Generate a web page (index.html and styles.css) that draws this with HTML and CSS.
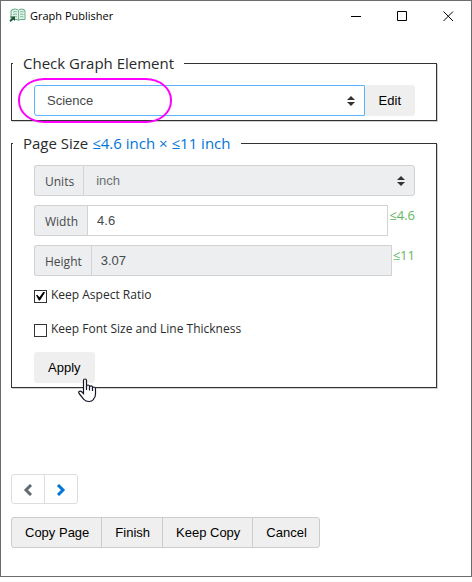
FILE: index.html
```html
<!DOCTYPE html>
<html lang="en">
<head>
<meta charset="utf-8">
<title>Graph Publisher</title>
<link rel="stylesheet" href="styles.css">
</head>
<body>
<div class="window">
  <header class="titlebar">
    <svg class="app-icon" width="18" height="16" viewBox="0 0 18 16" aria-hidden="true">
      <path d="M3 2.500V1.500Q7 .2 9.500 2.200Q12 .2 15 1.500V2.500H16V11.500H11L9.500 12.500L8 11.500H2V2.500Z" fill="#e3f3ea" stroke="#64a987"/>
      <path d="M9.500 2.500V12M4 4Q6.500 3 8 4M4 6.500Q6.500 5.500 8 6.500M4 9Q6.500 8 8 9M11 4Q13 3 14.500 4M11 6.500Q13 5.500 14.500 6.500M11 9Q13 8 14.500 9" fill="none" stroke="#7db898"/>
      <path d="M1 8.500H6V13L4.500 11.500L1.500 14L.5 12.500L3 10Z" fill="#1d5438"/>
    </svg>
    <h1 class="title">Graph Publisher</h1>
    <div class="window-controls">
      <button type="button" class="window-button" aria-label="Minimize"><svg width="11" height="11" viewBox="0 0 11 11"><path d="M0 5.500H10"/></svg></button>
      <button type="button" class="window-button" aria-label="Maximize"><svg width="11" height="11" viewBox="0 0 11 11"><path d="M.5 .5H9.500V9.500H.5Z"/></svg></button>
      <button type="button" class="window-button" aria-label="Close"><svg width="11" height="11" viewBox="0 0 11 11"><path d="M.5 .5L10 10M10 .5L.5 10"/></svg></button>
    </div>
  </header>
  <main class="content">
    <fieldset class="group">
      <legend>Check Graph Element</legend>
      <div class="row">
        <div class="select-wrap">
          <select class="control focused" aria-label="Graph element"><option>Science</option></select>
          <svg class="arrows" width="8" height="10" viewBox="0 0 8 10" aria-hidden="true"><path d="M0 4L4 0L8 4ZM0 6H8L4 10Z"/></svg>
        </div>
        <button type="button" class="button">Edit</button>
      </div>
      <div class="highlight"></div>
    </fieldset>
    <fieldset class="group">
      <legend>Page Size <span class="limit">≤4.6 inch × ≤11 inch</span></legend>
      <div class="fields">
        <div class="row">
          <label class="addon" for="units">Units</label>
          <div class="select-wrap">
            <select id="units" class="control units" disabled><option>inch</option></select>
            <svg class="arrows" width="8" height="10" viewBox="0 0 8 10" aria-hidden="true"><path d="M0 4L4 0L8 4ZM0 6H8L4 10Z"/></svg>
          </div>
        </div>
        <div class="row">
          <label class="addon" for="width">Width</label>
          <input id="width" class="control" type="text" value="4.6">
          <span class="hint">≤4.6</span>
        </div>
        <div class="row">
          <label class="addon" for="height">Height</label>
          <input id="height" class="control" type="text" value="3.07" readonly>
          <span class="hint">≤11</span>
        </div>
      </div>
      <div class="checks">
        <label class="check"><input type="checkbox" checked>Keep Aspect Ratio</label>
        <label class="check"><input type="checkbox">Keep Font Size and Line Thickness</label>
      </div>
      <div class="apply">
        <button type="button" class="button">Apply</button>
        <svg class="cursor" width="19" height="25" viewBox="0 0 19 25" aria-hidden="true">
          <path d="M5.500 14V2.500Q5.500 1 7 1Q8.500 1 8.500 2.500V8.500Q8.500 7 10 7Q11.500 7 11.500 8.500V9Q11.500 7.800 13 7.800Q14.500 7.800 14.500 9.200V10Q14.500 9 16 9Q17.500 9 17.500 11V16Q17.500 19.500 15.500 21V21.500Q14 23.500 11 23.500Q7.500 23.500 6 21.500L1.500 16Q.2 14.500 1 13.500Q2.500 12.500 4 14L5.500 15.500Z" fill="#fff" stroke="#15152a" stroke-width="1.200"/>
          <path d="M8.500 8V12M11.500 9V12.500M14.500 10V13" fill="none" stroke="#15152a" stroke-width="1.200"/>
        </svg>
      </div>
    </fieldset>
    <nav class="pager">
      <button type="button" class="page-button" aria-label="Previous"><svg width="10" height="12" viewBox="0 0 10 12"><path d="M8 1L3 6L8 11"/></svg></button>
      <button type="button" class="page-button next" aria-label="Next"><svg width="10" height="12" viewBox="0 0 10 12"><path d="M2 1L7 6L2 11"/></svg></button>
    </nav>
    <div class="actions">
      <button type="button">Copy Page</button>
      <button type="button">Finish</button>
      <button type="button">Keep Copy</button>
      <button type="button">Cancel</button>
    </div>
  </main>
</div>
</body>
</html>
```
FILE: styles.css
```css
* { box-sizing: border-box; }

body {
  margin: 0;
  background: #fff;
  color: #292b2c;
  font: 13px/20px "Open Sans", "Noto Sans", sans-serif;
}

button, input, select {
  font: 13px/20px "Liberation Sans", sans-serif;
}

.window {
  border: 1px solid #6d6d6d;
}

.titlebar {
  display: flex;
  align-items: center;
  height: 30px;
  padding-left: 8px;
}

.title {
  flex: 1;
  margin: 0 0 0 3px;
  color: #000;
  font-size: 11px;
  font-weight: 400;
}

.window-controls { display: flex; }

.window-button {
  width: 46px;
  height: 28px;
  padding: 0;
  border: 0;
  background: none;
}

.window-button svg {
  fill: none;
  stroke: #000;
  vertical-align: middle;
}

.content { padding: 20px 34px 28px 10px; }

.group {
  position: relative;
  min-width: 0;
  margin: 0 0 10px;
  padding: 10px 21px 4px 22px;
  border: 1px solid #333;
  box-shadow: 1px 1px 0 #d0d0d0;
}

legend {
  margin-left: -21px;
  padding: 0 10px;
  font-size: 15px;
  line-height: 24px;
}

.limit { color: #0275d8; }

.row { display: flex; }

.fields {
  display: grid;
  gap: 9px;
}

.select-wrap {
  position: relative;
  display: flex;
  flex: 1;
}

.control {
  flex: 1;
  width: 100%;
  min-width: 0;
  height: 31px;
  padding: 4px 9px;
  border: 1px solid #d0d2d3;
  border-radius: 0;
  background: #fff;
  color: #464a4c;
  appearance: none;
  outline: 0;
}

select.control { padding: 4px 12px; }

.control.focused {
  border-color: #5cb3fd;
  border-radius: 3px 0 0 3px;
}

.control.units {
  border-radius: 0 3px 3px 0;
  color: #6b7073;
  opacity: 1;
}

.control:disabled, .control:read-only:not(select) { background: #eceeef; }

.arrows {
  position: absolute;
  top: 11px;
  right: 10px;
  fill: #333;
  pointer-events: none;
}

.addon {
  padding: 6px 9px 3px 10px;
  border: 1px solid #d0d2d3;
  border-right: 0;
  border-radius: 3px 0 0 3px;
  background: #eceeef;
  color: #464a4c;
  font-size: 12px;
}

.hint {
  padding-left: 1px;
  color: #5cb85c;
}

.button {
  height: 31px;
  padding: 0 14px;
  border: 0;
  border-radius: 3px;
  background: #efefef;
  color: #000;
}

.checks {
  display: grid;
  gap: 14px;
  margin-top: 9px;
}

.check {
  display: flex;
  align-items: center;
  gap: 4px;
  font-size: 12px;
}

.check input {
  display: grid;
  place-items: center;
  width: 13px;
  height: 13px;
  margin: 2px 0 0;
  border: 1px solid #333;
  background: #fff;
  appearance: none;
}

.check input:checked::before {
  content: "";
  width: 9px;
  height: 9px;
  background: #000;
  clip-path: polygon(0 42%, 14% 36%, 38% 64%, 84% 0, 100% 10%, 44% 100%, 32% 100%);
}

.apply {
  position: relative;
  display: flex;
  margin-top: 13px;
}

.cursor {
  position: absolute;
  top: 26px;
  left: 44px;
}

.highlight {
  position: absolute;
  top: 3px;
  left: 6px;
  width: 154px;
  height: 45px;
  border: 2px solid #f0f;
  border-radius: 26px / 22px;
  pointer-events: none;
}

.pager, .actions { display: flex; }

.pager { margin-top: 86px; }

.page-button {
  width: 34px;
  height: 30px;
  padding: 0;
  border: 1px solid #ddd;
  border-radius: 3px 0 0 3px;
  background: #fff;
  color: #636c72;
}

.page-button.next {
  margin-left: -1px;
  border-radius: 0 3px 3px 0;
  color: #0275d8;
}

.page-button svg {
  fill: none;
  stroke: currentColor;
  stroke-width: 3;
  vertical-align: middle;
}

.actions { margin-top: 13px; }

.actions button {
  height: 31px;
  padding: 0 12px 0 13px;
  border: 1px solid #ccc;
  background: #efefef;
  color: #000;
}

.actions button + button { margin-left: -1px; }
.actions button:first-child { border-radius: 3px 0 0 3px; }
.actions button:last-child { border-radius: 0 3px 3px 0; }
```
